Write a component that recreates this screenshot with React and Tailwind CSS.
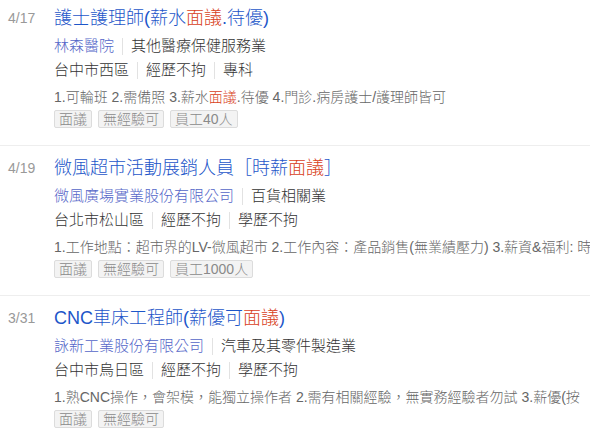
const jobs = [
  {
    date: "4/17",
    title: ["護士護理師(薪水", { hl: "面議" }, ".待優)"],
    company: "林森醫院",
    industry: "其他醫療保健服務業",
    info: ["台中市西區", "經歷不拘", "專科"],
    desc: ["1.可輪班 2.需備照 3.薪水", { hl: "面議" }, ".待優 4.門診.病房護士/護理師皆可"],
    tags: ["面議", "無經驗可", "員工40人"],
  },
  {
    date: "4/19",
    title: ["微風超市活動展銷人員［時薪", { hl: "面議" }, "］"],
    company: "微風廣場實業股份有限公司",
    industry: "百貨相關業",
    info: ["台北市松山區", "經歷不拘", "學歷不拘"],
    desc: ["1.工作地點：超市界的LV-微風超市 2.工作內容：產品銷售(無業績壓力) 3.薪資&福利: 時"],
    tags: ["面議", "無經驗可", "員工1000人"],
  },
  {
    date: "3/31",
    title: ["CNC車床工程師(薪優可", { hl: "面議" }, ")"],
    company: "詠新工業股份有限公司",
    industry: "汽車及其零件製造業",
    info: ["台中市烏日區", "經歷不拘", "學歷不拘"],
    desc: ["1.熟CNC操作，會架模，能獨立操作者 2.需有相關經驗，無實務經驗者勿試 3.薪優(按"],
    tags: ["面議", "無經驗可"],
  },
];

// keyword highlight inside title / description
function Rich({ parts }) {
  return parts.map((p, i) =>
    typeof p === "string" ? (
      <span key={i}>{p}</span>
    ) : (
      <span key={i} className="text-[#d8401a]">{p.hl}</span>
    )
  );
}

function Sep() {
  return <div className="w-px h-[17px] bg-[#e2e2e2] mx-[8px] shrink-0" />;
}

function JobItem({ job, first }) {
  return (
    <div className={`flex w-[590px] border-b border-[#eeeeee] pb-[17px] ${first ? "pt-[5px]" : "pt-[9px]"}`}>
      {/* date column */}
      <div className="w-[54px] shrink-0 pl-[8px] text-[14px] leading-[26px] text-[#999999]">
        {job.date}
      </div>

      <div className="flex-1 min-w-0">
        <div className="text-[18px] leading-[26px] text-[#1d56c9] whitespace-nowrap">
          <Rich parts={job.title} />
        </div>

        <div className="mt-[3px] flex items-center h-[24px] text-[15px] whitespace-nowrap">
          <span className="text-[#5466c8]">{job.company}</span>
          <Sep />
          <span className="text-[#333333]">{job.industry}</span>
        </div>

        <div className="flex items-center h-[24px] text-[15px] text-[#333333] whitespace-nowrap">
          {job.info.map((t, i) => (
            <div key={t + i} className="flex items-center">
              {i > 0 && <Sep />}
              <span>{t}</span>
            </div>
          ))}
        </div>

        <div className="mt-[4px] h-[22px] leading-[22px] text-[14px] text-[#666666] whitespace-nowrap overflow-hidden">
          <Rich parts={job.desc} />
        </div>

        <div className="mt-[2px] flex gap-[6px]">
          {job.tags.map((t) => (
            <span
              key={t}
              className="h-[18px] px-[4px] text-[14px] leading-[16px] text-[#8a8a8a] bg-[#f3f3f3] border border-[#dcdcdc] rounded-[2px] whitespace-nowrap"
            >
              {t}
            </span>
          ))}
        </div>
      </div>
    </div>
  );
}

export default function App() {
  return (
    <div
      className="w-[598px] h-[440px] bg-white overflow-hidden font-light"
      style={{ fontFamily: '"Liberation Sans", "Noto Sans CJK TC", sans-serif' }}
    >
      {jobs.map((job, i) => (
        <JobItem key={job.date} job={job} first={i === 0} />
      ))}
    </div>
  );
}
